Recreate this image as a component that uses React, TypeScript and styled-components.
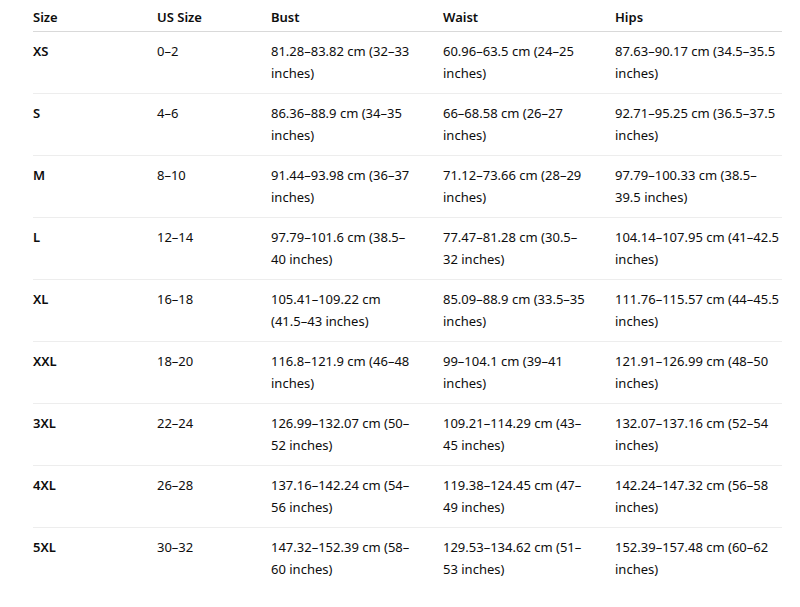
import React from "react";
import styled, { createGlobalStyle } from "styled-components";

const Global = createGlobalStyle`
  html, body { margin: 0; padding: 0; background: #ffffff; }
  body { font-family: "Noto Sans", "Open Sans", sans-serif; color: #0d0d0d; }
`;

const Page = styled.div`
  padding: 0 18px 0 33px;
`;

const Table = styled.table`
  width: 749px;
  table-layout: fixed;
  border-collapse: collapse;
  font-size: 13px;
  line-height: 22px;
`;

const Th = styled.th<{ $first?: boolean; $last?: boolean }>`
  text-align: left;
  font-weight: 600;
  padding: 6px ${(p) => (p.$last ? "2px" : "19px")} 3px ${(p) => (p.$first ? "0" : "8px")};
  border-bottom: 1px solid rgba(0, 0, 0, 0.15);
  vertical-align: top;
`;

const Row = styled.tr<{ $last?: boolean }>`
  border-bottom: ${(p) => (p.$last ? "none" : "1px solid rgba(0, 0, 0, 0.07)")};
`;

const Td = styled.td<{ $first?: boolean; $last?: boolean }>`
  padding: 8px ${(p) => (p.$last ? "2px" : "19px")} 9px ${(p) => (p.$first ? "0" : "8px")};
  vertical-align: top;
  font-weight: ${(p) => (p.$first ? 600 : 400)};
`;

const headers = ["Size", "US Size", "Bust", "Waist", "Hips"];
const widths = [116, 114, 172, 172, 175];

const rows: string[][] = [
  ["XS", "0–2", "81.28–83.82 cm (32–33 inches)", "60.96–63.5 cm (24–25 inches)", "87.63–90.17 cm (34.5–35.5 inches)"],
  ["S", "4–6", "86.36–88.9 cm (34–35 inches)", "66–68.58 cm (26–27 inches)", "92.71–95.25 cm (36.5–37.5 inches)"],
  ["M", "8–10", "91.44–93.98 cm (36–37 inches)", "71.12–73.66 cm (28–29 inches)", "97.79–100.33 cm (38.5–39.5 inches)"],
  ["L", "12–14", "97.79–101.6 cm (38.5–40 inches)", "77.47–81.28 cm (30.5–32 inches)", "104.14–107.95 cm (41–42.5 inches)"],
  ["XL", "16–18", "105.41–109.22 cm (41.5–43 inches)", "85.09–88.9 cm (33.5–35 inches)", "111.76–115.57 cm (44–45.5 inches)"],
  ["XXL", "18–20", "116.8–121.9 cm (46–48 inches)", "99–104.1 cm (39–41 inches)", "121.91–126.99 cm (48–50 inches)"],
  ["3XL", "22–24", "126.99–132.07 cm (50–52 inches)", "109.21–114.29 cm (43–45 inches)", "132.07–137.16 cm (52–54 inches)"],
  ["4XL", "26–28", "137.16–142.24 cm (54–56 inches)", "119.38–124.45 cm (47–49 inches)", "142.24–147.32 cm (56–58 inches)"],
  ["5XL", "30–32", "147.32–152.39 cm (58–60 inches)", "129.53–134.62 cm (51–53 inches)", "152.39–157.48 cm (60–62 inches)"],
];

export default function App() {
  return (
    <Page>
      <Global />
      <Table>
        <colgroup>
          {widths.map((w, i) => (
            <col key={i} style={{ width: w }} />
          ))}
        </colgroup>
        <thead>
          <tr>
            {headers.map((h, i) => (
              <Th key={h} $first={i === 0} $last={i === headers.length - 1}>
                {h}
              </Th>
            ))}
          </tr>
        </thead>
        <tbody>
          {rows.map((r, ri) => (
            <Row key={r[0]} $last={ri === rows.length - 1}>
              {r.map((c, ci) => (
                <Td key={ci} $first={ci === 0} $last={ci === r.length - 1}>
                  {c}
                </Td>
              ))}
            </Row>
          ))}
        </tbody>
      </Table>
    </Page>
  );
}
